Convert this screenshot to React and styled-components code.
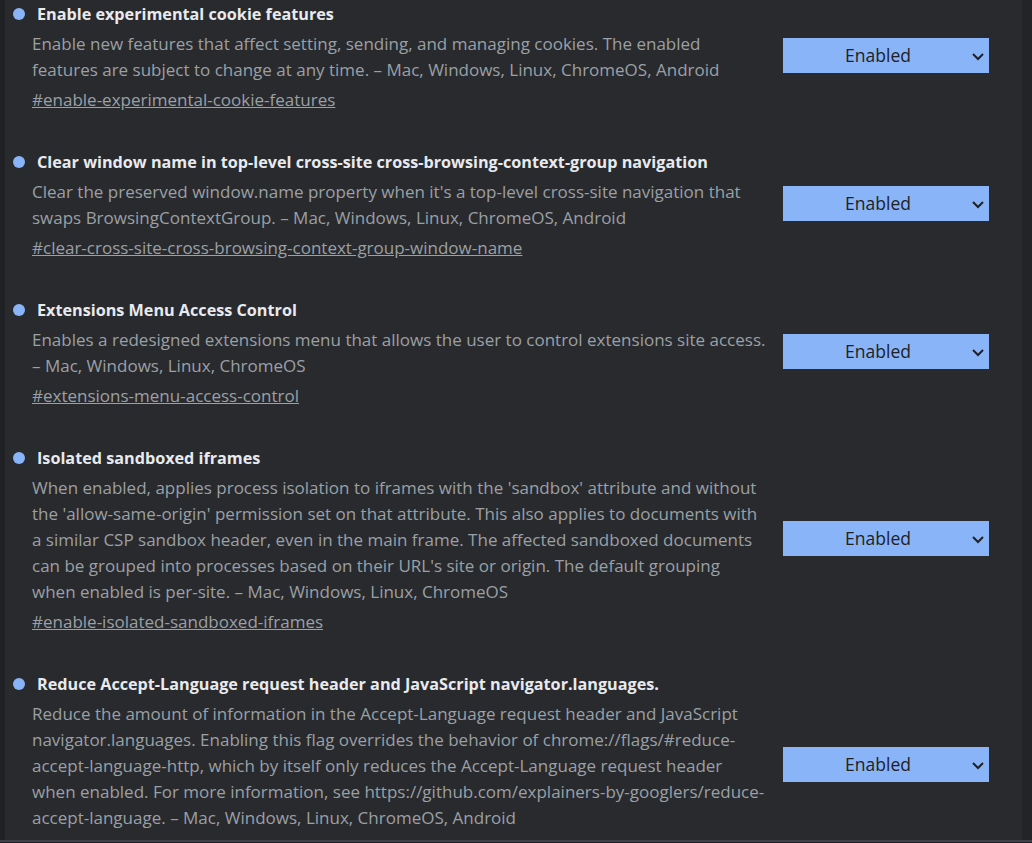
import styled, { createGlobalStyle } from "styled-components";

const GlobalStyle = createGlobalStyle`
  html, body {
    margin: 0;
    padding: 0;
    background: #292a2d;
    overflow: hidden;
  }
  * { box-sizing: border-box; }
`;

const flags = [
  {
    name: "Enable experimental cookie features",
    lines: [
      "Enable new features that affect setting, sending, and managing cookies. The enabled",
      "features are subject to change at any time. – Mac, Windows, Linux, ChromeOS, Android",
    ],
    id: "enable-experimental-cookie-features",
  },
  {
    name: "Clear window name in top-level cross-site cross-browsing-context-group navigation",
    lines: [
      "Clear the preserved window.name property when it's a top-level cross-site navigation that",
      "swaps BrowsingContextGroup. – Mac, Windows, Linux, ChromeOS, Android",
    ],
    id: "clear-cross-site-cross-browsing-context-group-window-name",
  },
  {
    name: "Extensions Menu Access Control",
    lines: [
      "Enables a redesigned extensions menu that allows the user to control extensions site access.",
      "– Mac, Windows, Linux, ChromeOS",
    ],
    id: "extensions-menu-access-control",
  },
  {
    name: "Isolated sandboxed iframes",
    lines: [
      "When enabled, applies process isolation to iframes with the 'sandbox' attribute and without",
      "the 'allow-same-origin' permission set on that attribute. This also applies to documents with",
      "a similar CSP sandbox header, even in the main frame. The affected sandboxed documents",
      "can be grouped into processes based on their URL's site or origin. The default grouping",
      "when enabled is per-site. – Mac, Windows, Linux, ChromeOS",
    ],
    id: "enable-isolated-sandboxed-iframes",
  },
  {
    name: "Reduce Accept-Language request header and JavaScript navigator.languages.",
    lines: [
      "Reduce the amount of information in the Accept-Language request header and JavaScript",
      "navigator.languages. Enabling this flag overrides the behavior of chrome://flags/#reduce-",
      "accept-language-http, which by itself only reduces the Accept-Language request header",
      "when enabled. For more information, see https://github.com/explainers-by-googlers/reduce-",
      "accept-language. – Mac, Windows, Linux, ChromeOS, Android",
    ],
    id: "reduce-accept-language",
  },
];

const Page = styled.div`
  display: flex;
  flex-direction: column;
  height: 100vh;
  font-family: "Segoe UI", "Open Sans", sans-serif;
`;

const Body = styled.div`
  flex: 1;
  display: flex;
  min-height: 0;
  overflow: hidden;
`;

const LeftEdge = styled.div`
  width: 5px;
  background: #202124;
`;

const Main = styled.main`
  flex: 1;
  padding: 1px 0 0 8px;
  overflow: hidden;
`;

const ScrollTrack = styled.div`
  width: 10px;
  background: #232428;
`;

const BottomBar = styled.div`
  height: 3px;
  border-top: 2px solid #3d4149;
  background: #202124;
`;

const Experiment = styled.section`
  display: flex;
  align-items: center;
  margin-bottom: 36px;
`;

const Info = styled.div`
  width: 770px;
`;

const Title = styled.h2`
  display: flex;
  align-items: center;
  margin: 0 0 4px;
  height: 26px;
  font-size: 16.2px;
  font-weight: 700;
  color: #e8eaed;
  white-space: nowrap;
`;

const Dot = styled.span`
  width: 12px;
  height: 12px;
  border-radius: 50%;
  background: #8ab4f8;
  margin-right: 12px;
  flex-shrink: 0;
`;

const Description = styled.p`
  margin: 0 0 4px 19px;
  font-size: 17px;
  line-height: 26px;
  color: #9aa0a6;
`;

const Line = styled.span`
  display: block;
  white-space: nowrap;
`;

const Permalink = styled.a`
  display: block;
  margin-left: 19px;
  font-size: 17px;
  line-height: 26px;
  color: #9aa0a6;
  text-decoration: underline;
`;

const Select = styled.div`
  width: 206px;
  height: 35px;
  background: #8ab4f8;
  color: #202124;
  display: flex;
  align-items: center;
  justify-content: center;
  position: relative;
  padding: 0 16px 2px 0;
  font-size: 17.5px;
  margin-top: -3px;
`;

const Chevron = styled.svg`
  position: absolute;
  right: 4px;
  top: 14px;
`;

const Flag = ({ flag }) => (
  <Experiment>
    <Info>
      <Title>
        <Dot />
        {flag.name}
      </Title>
      <Description>
        {flag.lines.map((l, i) => (
          <Line key={i}>{l}</Line>
        ))}
      </Description>
      <Permalink href={"#" + flag.id}>#{flag.id}</Permalink>
    </Info>
    <Select>
      Enabled
      <Chevron width="14" height="9" viewBox="0 0 14 9">
        <path d="M2 2 L7 7 L12 2" fill="none" stroke="#202124" strokeWidth="2" />
      </Chevron>
    </Select>
  </Experiment>
);

export default function App() {
  return (
    <Page>
      <GlobalStyle />
      <Body>
        <LeftEdge />
        <Main>
          {flags.map((f) => (
            <Flag key={f.id} flag={f} />
          ))}
        </Main>
        <ScrollTrack />
      </Body>
      <BottomBar />
    </Page>
  );
}
